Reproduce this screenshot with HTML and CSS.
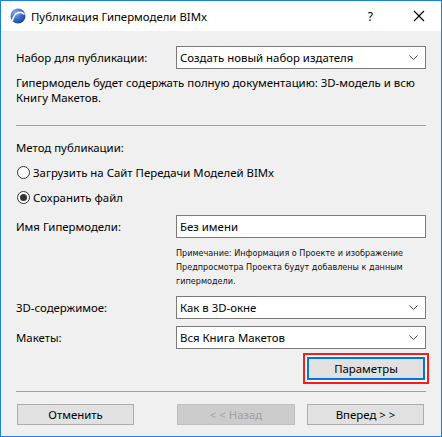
FILE: index.html
```html
<!DOCTYPE html>
<html lang="ru">
<head>
<meta charset="utf-8">
<title>Публикация Гипермодели BIMx</title>
<link rel="stylesheet" href="styles.css">
</head>
<body>
<div class="window">
  <div class="titlebar">
    <svg class="app-icon" width="16" height="16" viewBox="0 0 16 16">
      <defs>
        <radialGradient id="g" cx="0.35" cy="0.3" r="0.8">
          <stop offset="0" stop-color="#8fb4f0"/>
          <stop offset="0.5" stop-color="#3a6fd0"/>
          <stop offset="1" stop-color="#1c3e91"/>
        </radialGradient>
      </defs>
      <circle cx="8" cy="8" r="7.5" fill="url(#g)"/>
      <path d="M2.5 12.5 C4 5 10 2.5 14 6" stroke="#fff" stroke-width="1.6" fill="none" stroke-linecap="round"/>
    </svg>
    <span class="title">Публикация Гипермодели BIMx</span>
    <span class="help">?</span>
    <svg class="close" width="12" height="12" viewBox="0 0 12 12">
      <path d="M1 1 L11 11 M11 1 L1 11" stroke="#000" stroke-width="1.1" fill="none"/>
    </svg>
  </div>
  <div class="content">
    <div class="row row-set">
      <span class="label">Набор для публикации:</span>
      <div class="select"><span>Создать новый набор издателя</span><svg class="chev" width="9" height="5" viewBox="0 0 9 5"><path d="M0.5 0.5 L4.5 4.5 L8.5 0.5" stroke="#444" fill="none"/></svg></div>
    </div>
    <p class="desc">Гипермодель будет содержать полную документацию: 3D-модель и всю Книгу Макетов.</p>
    <div class="sep sep-top"></div>
    <div class="method">Метод публикации:</div>
    <div class="radio-row radio-first"><span class="radio"></span><span>Загрузить на Сайт Передачи Моделей BIMx</span></div>
    <div class="radio-row"><span class="radio checked"></span><span>Сохранить файл</span></div>
    <div class="row row-name">
      <span class="label">Имя Гипермодели:</span>
      <div class="input">Без имени</div>
    </div>
    <p class="note">Примечание: Информация о Проекте и изображение Предпросмотра Проекта будут добавлены к данным гипермодели.</p>
    <div class="row row-3d">
      <span class="label">3D-содержимое:</span>
      <div class="select"><span>Как в 3D-окне</span><svg class="chev" width="9" height="5" viewBox="0 0 9 5"><path d="M0.5 0.5 L4.5 4.5 L8.5 0.5" stroke="#444" fill="none"/></svg></div>
    </div>
    <div class="row row-layouts">
      <span class="label">Макеты:</span>
      <div class="select"><span>Вся Книга Макетов</span><svg class="chev" width="9" height="5" viewBox="0 0 9 5"><path d="M0.5 0.5 L4.5 4.5 L8.5 0.5" stroke="#444" fill="none"/></svg></div>
    </div>
    <div class="param-row">
      <div class="btn btn-param">Параметры</div>
    </div>
    <div class="sep sep-bottom"></div>
    <div class="buttons">
      <div class="btn btn-cancel">Отменить</div>
      <div class="btn btn-back disabled">&lt; &lt; Назад</div>
      <div class="btn btn-next">Вперед &gt; &gt;</div>
    </div>
  </div>
</div>
</body>
</html>
```
FILE: styles.css
```css
* { box-sizing: border-box; }
html, body { margin: 0; padding: 0; background: #f0f0f0; }
body {
  font-family: "Noto Sans", "Open Sans", sans-serif;
  font-size: 11.4px;
  color: #000;
}
.window {
  width: 442px;
  height: 437px;
  border: 1px solid #1883d7;
  background: #f0f0f0;
  display: flex;
  flex-direction: column;
}
.titlebar {
  height: 30px;
  background: #fff;
  display: flex;
  align-items: center;
  flex-shrink: 0;
}
.app-icon { margin-left: 9px; margin-top: -1px; }
.title { margin-left: 5px; font-size: 11.4px; }
.help { margin-left: auto; margin-right: 40px; font-size: 12px; }
.close { margin-right: 16px; }
.content {
  padding: 0 15px;
  display: flex;
  flex-direction: column;
}
.row { display: flex; align-items: center; height: 23px; }
.label { width: 160px; flex-shrink: 0; }
.select, .input {
  width: 250px;
  height: 23px;
  border: 1px solid #7a7a7a;
  background: #fff;
  display: flex;
  align-items: center;
  padding-left: 3px;
}
.select span { flex: 1; }
.chev { margin-right: 7px; }
.row-set { margin-top: 15px; }
.desc { margin: 6px 0 0; line-height: 15px; }
.sep { height: 1px; background: #a0a0a0; }
.sep-top { margin-top: 20px; }
.method { margin-top: 14px; line-height: 16px; }
.radio-row { display: flex; align-items: center; height: 24px; margin-top: 1px; }
.radio-first { margin-top: 4px; }
.radio {
  width: 13px; height: 13px;
  border: 1px solid #333;
  border-radius: 50%;
  background: #fff;
  margin-left: 1px;
  margin-right: 3px;
  display: flex; align-items: center; justify-content: center;
}
.radio.checked::after {
  content: "";
  width: 7px; height: 7px; border-radius: 50%; background: #333;
}
.row-name { margin-top: 6px; }
.note {
  margin: 8px 0 0 160px;
  font-family: "DejaVu Sans Condensed", "DejaVu Sans", sans-serif;
  font-size: 9px;
  line-height: 14px;
  color: #111;
  width: 250px;
}
.row-3d { margin-top: 8px; }
.row-layouts { margin-top: 7px; }
.param-row { display: flex; justify-content: flex-end; margin-top: 8px; }
.btn {
  height: 21px;
  width: 117px;
  background: #e1e1e1;
  border: 1px solid #adadad;
  display: flex; align-items: center; justify-content: center;
}
.btn-param {
  width: 118px;
  height: 23px;
  border: 2px solid #0078d7;
  box-shadow: 0 0 0 2px #fff, 0 0 0 4px #ff1a1a;
  margin-right: 1px;
}
.sep-bottom { margin-top: 11px; }
.buttons { display: flex; margin-top: 12px; }
.btn-cancel { margin-left: 1px; }
.btn-back { margin-left: 43px; width: 118px; }
.btn-next { margin-left: 12px; }
.disabled { background: #cccccc; border-color: #bfbfbf; color: #a0a0a0; }
```
